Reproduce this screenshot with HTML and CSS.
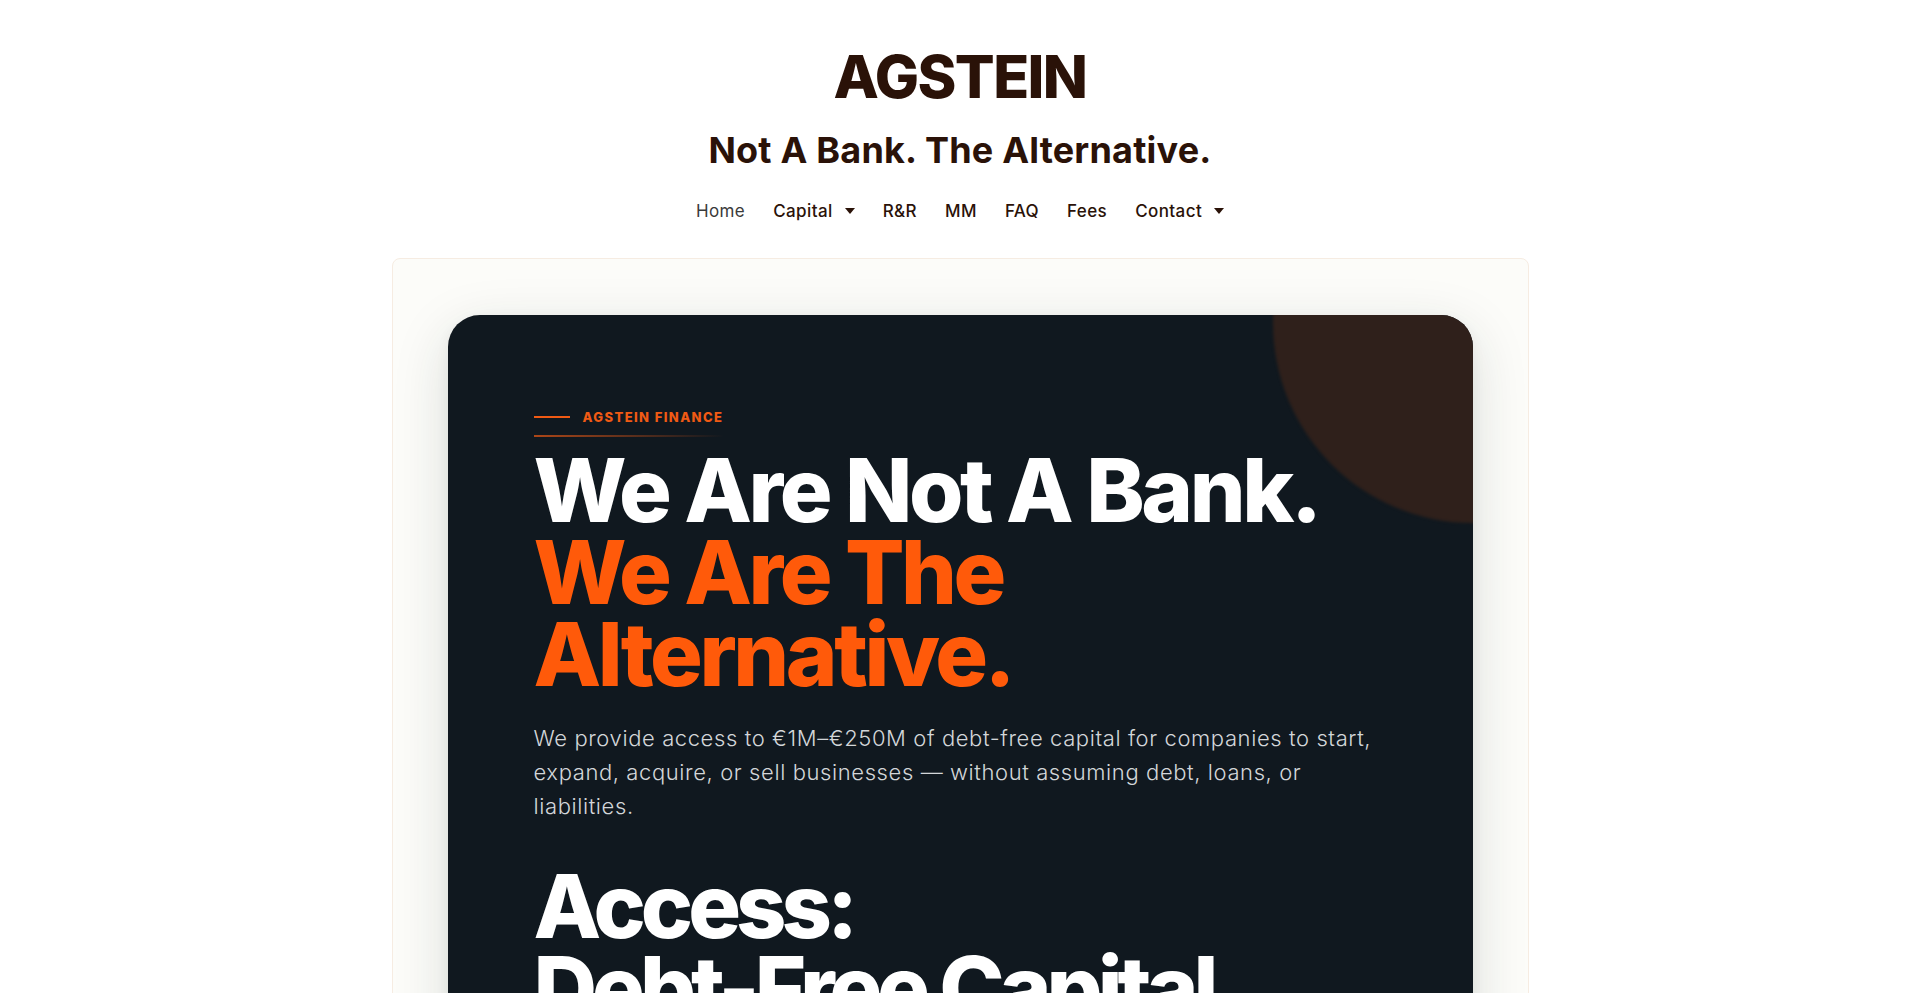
FILE: index.html
```html
<!DOCTYPE html>
<html lang="en">
<head>
<meta charset="utf-8">
<title>AGSTEIN – Not A Bank. The Alternative.</title>
<link rel="stylesheet" href="styles.css">
</head>
<body>
<header class="site-header">
  <div class="brand">AGSTEIN</div>
  <div class="tagline">Not A Bank. The Alternative.</div>
  <nav class="nav">
    <a class="nav-link nav-link--home" href="#">Home</a>
    <a class="nav-link" href="#">Capital <span class="caret"></span></a>
    <a class="nav-link" href="#">R&amp;R</a>
    <a class="nav-link" href="#">MM</a>
    <a class="nav-link" href="#">FAQ</a>
    <a class="nav-link" href="#">Fees</a>
    <a class="nav-link" href="#">Contact <span class="caret"></span></a>
  </nav>
</header>
<main class="page">
  <section class="frame">
    <div class="hero">
      <span class="orb"></span>
      <div class="eyebrow">
        <span class="eyebrow-line"></span>
        <span class="eyebrow-text">AGSTEIN FINANCE</span>
      </div>
      <div class="eyebrow-rule"></div>
      <h1 class="hero-title">We Are Not A Bank.<br><span class="accent">We Are The<br>Alternative.</span></h1>
      <p class="hero-lead">We provide access to €1M–€250M of debt-free capital for companies to start, expand, acquire, or sell businesses — without assuming debt, loans, or liabilities.</p>
      <h2 class="hero-sub">Access:<br>Debt-Free Capital</h2>
    </div>
  </section>
</main>
</body>
</html>
```
FILE: styles.css
```css
* { box-sizing: border-box; }
html, body { margin: 0; padding: 0; }
body {
  background: #ffffff;
  font-family: "Inter", "Open Sans", sans-serif;
  color: #2a1208;
  overflow: hidden;
}
.site-header {
  display: flex;
  flex-direction: column;
  align-items: center;
  padding-top: 45px;
}
.brand {
  font-size: 59px;
  font-weight: 800;
  letter-spacing: -1.6px;
  line-height: 1.1;
  color: #2a1208;
}
.tagline {
  margin-top: 19px;
  font-size: 36px;
  font-weight: 700;
  letter-spacing: 0.2px;
  line-height: 1.2;
  color: #2a1208;
}
.nav {
  display: flex;
  align-items: center;
  gap: 28px;
  margin-top: 29px;
}
.nav-link {
  display: flex;
  align-items: center;
  gap: 12px;
  font-size: 17px;
  font-weight: 500;
  letter-spacing: 0.4px;
  color: #2a1208;
  text-decoration: none;
}
.nav-link--home { color: #3a3a3a; font-weight: 400; }
.caret {
  width: 0; height: 0;
  border-left: 5px solid transparent;
  border-right: 5px solid transparent;
  border-top: 6px solid #2a1208;
}
.page {
  display: flex;
  justify-content: center;
  padding-top: 37px;
}
.frame {
  width: 1137px;
  background: #fcfcf9;
  border: 1px solid #f6ece2;
  border-radius: 8px;
  padding: 56px 55px 0;
}
.hero {
  position: relative;
  overflow: hidden;
  background: #10181f;
  border-radius: 32px;
  padding: 94px 86px 200px;
  box-shadow: 0 16px 55px rgba(30, 50, 40, 0.15), 0 4px 14px rgba(0,0,0,0.05);
}
.orb {
  position: absolute;
  width: 400px;
  height: 400px;
  top: -192px;
  right: -200px;
  border-radius: 50%;
  background: #2f201b;
  filter: blur(1.5px);
}
.eyebrow {
  position: relative;
  display: flex;
  align-items: center;
  gap: 13px;
}
.eyebrow-line {
  width: 36px;
  height: 2px;
  background: #f05a14;
}
.eyebrow-text {
  font-size: 13px;
  font-weight: 800;
  letter-spacing: 1.4px;
  color: #f05a14;
}
.eyebrow-rule {
  position: relative;
  width: 190px;
  height: 2px;
  margin-top: 10px;
  background: linear-gradient(90deg, rgba(240,90,20,0.7), rgba(240,90,20,0));
}
.hero-title {
  position: relative;
  margin: 12px 0 0;
  font-size: 88px;
  font-weight: 800;
  line-height: 82px;
  letter-spacing: -3.4px;
  color: #ffffff;
}
.accent { color: #ff5a0a; }
.hero-lead {
  position: relative;
  margin: 26px 0 0;
  max-width: 860px;
  font-size: 22px;
  font-weight: 300;
  line-height: 34px;
  letter-spacing: 0.6px;
  color: #d3d6d9;
}
.hero-sub {
  position: relative;
  margin: 42px 0 0;
  font-size: 88px;
  font-weight: 800;
  line-height: 82px;
  letter-spacing: -5px;
  color: #ffffff;
}
```
